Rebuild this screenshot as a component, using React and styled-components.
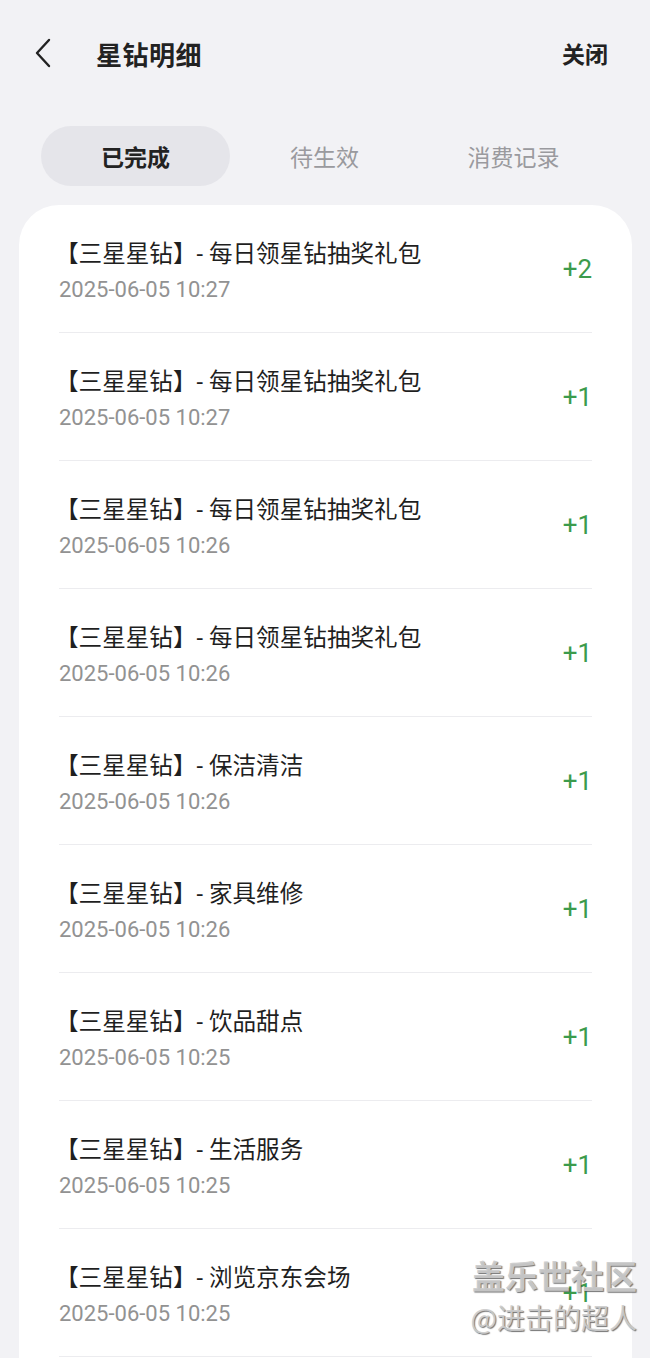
import React from 'react'
import styled, { createGlobalStyle } from 'styled-components'

const GlobalStyle = createGlobalStyle`
  html, body {
    margin: 0;
    padding: 0;
    background: #f2f2f5;
  }
  body {
    font-family: Roboto, "Noto Sans CJK SC", sans-serif;
    -webkit-font-smoothing: antialiased;
  }
`

const Page = styled.div`
  position: relative;
  width: 650px;
  height: 1358px;
  overflow: hidden;
  background: #f2f2f5;
`

const Header = styled.div`
  display: flex;
  align-items: center;
  height: 56px;
  padding: 25px 42px 0 32px;
`

const Back = styled.button`
  display: flex;
  align-items: center;
  justify-content: center;
  width: 22px;
  height: 32px;
  padding: 0;
  border: 0;
  background: none;
  color: #222;
`

const Title = styled.h1`
  flex: 1;
  margin: 0 0 0 42px;
  font: 700 26px "Noto Sans CJK SC", sans-serif;
  color: #222;
  letter-spacing: 0.5px;
`

const Close = styled.span`
  font: 700 23px "Noto Sans CJK SC", sans-serif;
  color: #222;
`

const Tabs = styled.div`
  display: grid;
  grid-template-columns: repeat(3, 1fr);
  margin: 45px 42px 0 41px;
`

const Tab = styled.div`
  display: flex;
  align-items: center;
  justify-content: center;
  height: 60px;
  border-radius: 30px;
  font: ${p => (p.$active ? 700 : 400)} 23px "Noto Sans CJK SC", sans-serif;
  color: ${p => (p.$active ? '#222' : '#9a9a9e')};
  background: ${p => (p.$active ? '#e5e5ea' : 'transparent')};
`

const Card = styled.div`
  margin: 19px 18px 0 19px;
  padding: 0 40px;
  background: #fff;
  border-radius: 40px 40px 0 0;
  min-height: 1200px;
`

const Row = styled.div`
  display: flex;
  align-items: center;
  height: 127px;
  border-bottom: 1px solid #ececef;
`

const Info = styled.div`
  flex: 1;
  display: flex;
  flex-direction: column;
  gap: 7px;
  margin-left: -4px;
  padding-top: 6px;
`

const ItemName = styled.div`
  font: 400 23.6px/30px Roboto, "Noto Sans CJK SC", sans-serif;
  color: #1f1f1f;
`

const ItemTime = styled.div`
  font: 400 22px/28px Roboto, sans-serif;
  color: #929292;
  margin-left: 4px;
`

const Amount = styled.div`
  font: 400 26px Roboto, sans-serif;
  color: #3c9b4c;
`

const Watermark = styled.div`
  position: absolute;
  right: 13px;
  top: 1254px;
  display: flex;
  flex-direction: column;
  align-items: flex-end;
  font-family: "Noto Sans CJK SC", sans-serif;
  color: rgba(205, 205, 205, 0.92);
  text-shadow: 1px 1px 1px rgba(70, 70, 70, 0.75);
  pointer-events: none;
`

const WmTitle = styled.div`
  font-size: 33px;
  font-weight: 700;
  line-height: 42px;
`

const WmUser = styled.div`
  font-size: 28px;
  line-height: 38px;
  margin-top: 2px;
`

const items = [
  ['每日领星钻抽奖礼包', '2025-06-05 10:27', '+2'],
  ['每日领星钻抽奖礼包', '2025-06-05 10:27', '+1'],
  ['每日领星钻抽奖礼包', '2025-06-05 10:26', '+1'],
  ['每日领星钻抽奖礼包', '2025-06-05 10:26', '+1'],
  ['保洁清洁', '2025-06-05 10:26', '+1'],
  ['家具维修', '2025-06-05 10:26', '+1'],
  ['饮品甜点', '2025-06-05 10:25', '+1'],
  ['生活服务', '2025-06-05 10:25', '+1'],
  ['浏览京东会场', '2025-06-05 10:25', '+1'],
]

export default function App() {
  return (
    <Page>
      <GlobalStyle />
      <Header>
        <Back aria-label="返回">
          <svg width="18" height="30" viewBox="0 0 18 30" fill="none">
            <path d="M15 2 L3 15 L15 28" stroke="#222" strokeWidth="2.4" strokeLinecap="round" strokeLinejoin="round" />
          </svg>
        </Back>
        <Title>星钻明细</Title>
        <Close>关闭</Close>
      </Header>
      <Tabs>
        <Tab $active>已完成</Tab>
        <Tab>待生效</Tab>
        <Tab>消费记录</Tab>
      </Tabs>
      <Card>
        {items.map(([name, time, amount], i) => (
          <Row key={i}>
            <Info>
              <ItemName>【三星星钻】- {name}</ItemName>
              <ItemTime>{time}</ItemTime>
            </Info>
            <Amount>{amount}</Amount>
          </Row>
        ))}
      </Card>
      <Watermark>
        <WmTitle>盖乐世社区</WmTitle>
        <WmUser>@进击的超人</WmUser>
      </Watermark>
    </Page>
  )
}
